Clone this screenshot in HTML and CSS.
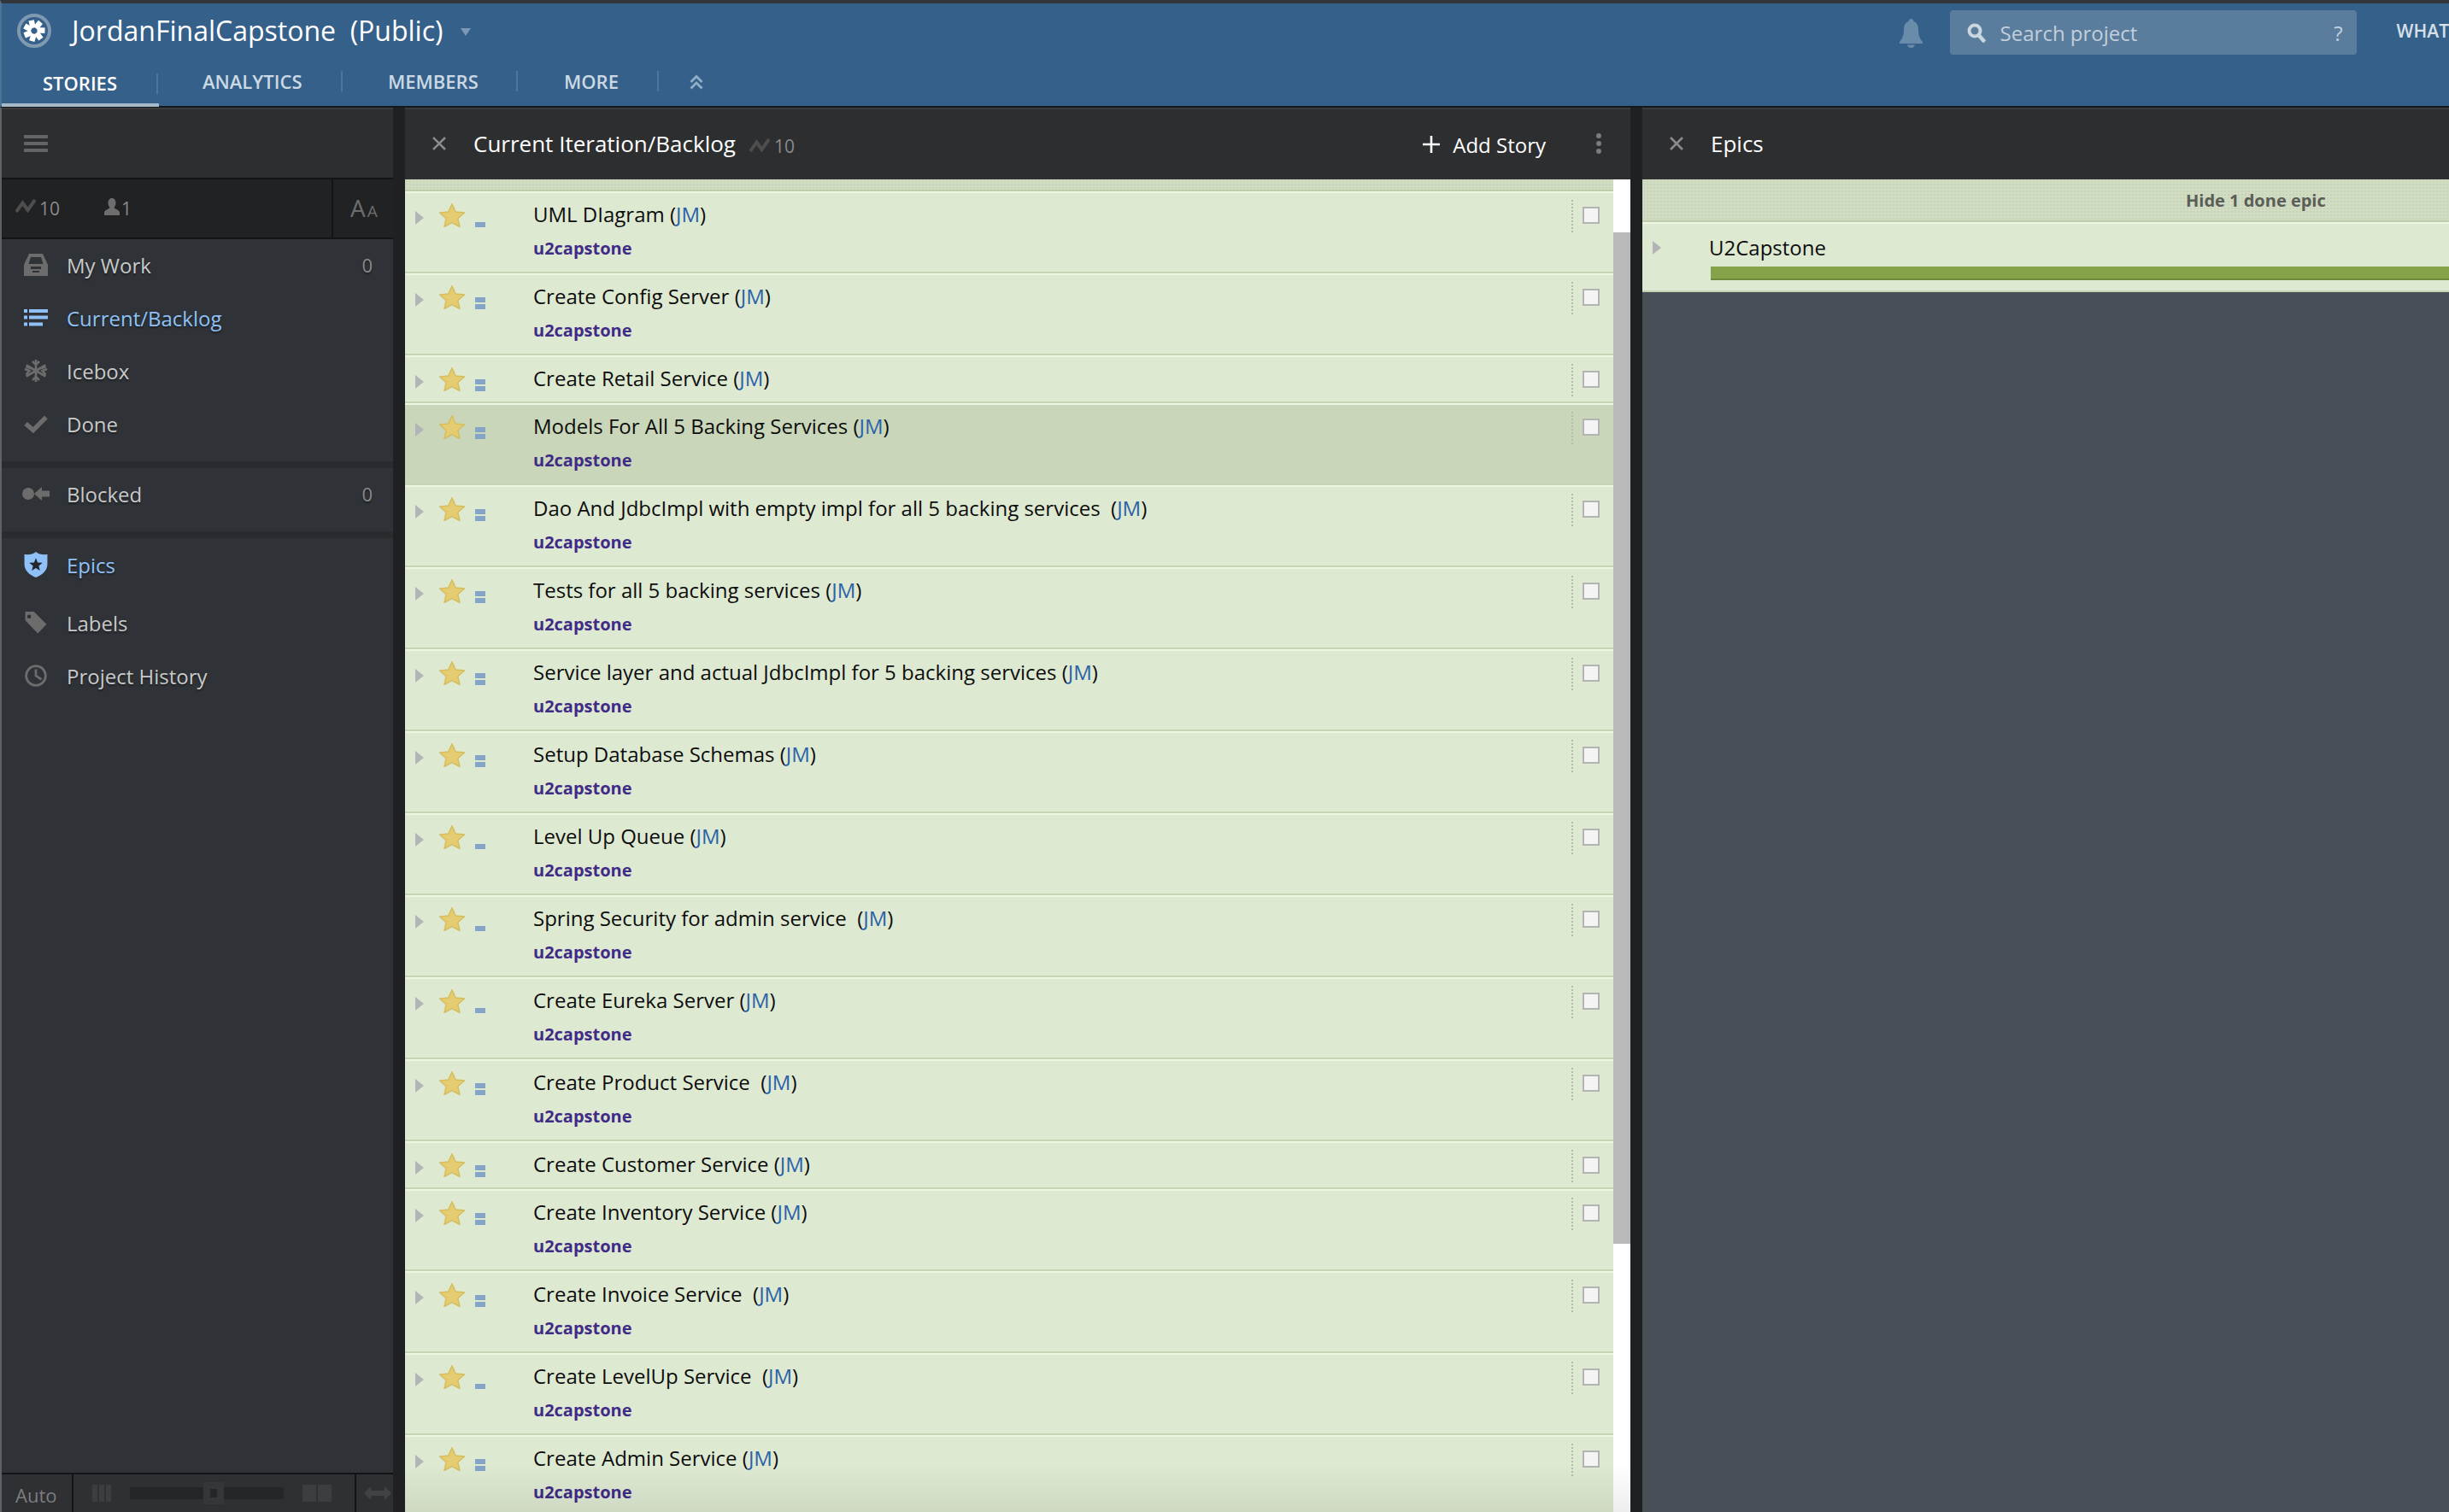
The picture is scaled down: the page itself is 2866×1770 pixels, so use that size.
FILE: index.html
```html
<!DOCTYPE html>
<html lang="en">
<head>
<meta charset="utf-8">
<title>JordanFinalCapstone (Public)</title>
<link rel="stylesheet" href="styles.css">
</head>
<body>
<svg class="sprite" width="0" height="0" aria-hidden="true">
  <defs>
    <symbol id="star" viewBox="0 0 30 28"><path d="M15 .8l4.200 9.200 10.200 1-7.600 6.700 2.200 9.800L15 22.600l-9 4.900 2.200-9.800L.6 11 10.800 10z" fill="#e3cd70" stroke="#d6bd5e" stroke-width="1.500" stroke-linejoin="round"/></symbol>
    <symbol id="chart" viewBox="0 0 24 16"><path d="M1 15L8.500 4.500l6 8.500L23 1" fill="none" stroke="currentColor" stroke-width="4"/></symbol>
  </defs>
</svg>
<header class="topbar">
  <div class="topbar-main">
    <svg class="logo" viewBox="0 0 40 40">
      <circle cx="20" cy="20" r="18" fill="#35608a" stroke="#7f99b1" stroke-width="4"/>
      <g fill="#fff">
        <rect x="16" y="7.500" width="6.500" height="9" transform="rotate(-12 20 20)"/>
        <rect x="16" y="7.500" width="6.500" height="9" transform="rotate(40 20 20)"/>
        <rect x="16" y="7.500" width="6.500" height="9" transform="rotate(92 20 20)"/>
        <rect x="16" y="7.500" width="6.500" height="9" transform="rotate(144 20 20)"/>
        <rect x="16" y="7.500" width="6.500" height="9" transform="rotate(196 20 20)"/>
        <rect x="16" y="7.500" width="6.500" height="9" transform="rotate(248 20 20)"/>
        <rect x="16" y="7.500" width="6.500" height="9" transform="rotate(300 20 20)"/>
      </g>
    </svg>
    <h1 class="project-name">JordanFinalCapstone&nbsp; (Public)</h1>
    <span class="caret"></span>
    <svg class="bell" viewBox="0 0 27 34"><path d="M13.500 0c2 0 3 1.500 3 3 4 1.500 5.500 5 5.500 10 0 6 1.500 10 5 14v2H0v-2c3.500-4 5-8 5-14 0-5 1.500-8.500 5.500-10 0-1.500 1-3 3-3zM9 30.500h9c-.5 2-2 3.500-4.500 3.500S9.500 32.500 9 30.500z" fill="#6a8cab"/></svg>
    <div class="search">
      <svg class="search-icon" viewBox="0 0 23 23"><circle cx="9" cy="9" r="6.500" fill="none" stroke="#c9d5df" stroke-width="4"/><path d="M13.500 14l7 8" stroke="#c9d5df" stroke-width="4.500"/></svg>
      <span class="search-text">Search project</span>
      <span class="search-help">?</span>
    </div>
    <span class="whats-new">WHAT</span>
  </div>
  <nav class="tabs">
    <a class="tab tab-active">STORIES</a>
    <a class="tab tab-analytics">ANALYTICS</a>
    <a class="tab tab-members">MEMBERS</a>
    <a class="tab tab-more">MORE</a>
    <svg class="tab-collapse" viewBox="0 0 16 18"><path d="M1.500 9l6.500-6.500L14.500 9M1.500 16.500L8 10l6.500 6.500" fill="none" stroke="#93aec7" stroke-width="2.800"/></svg>
  </nav>
</header>
<main class="workspace">
  <aside class="sidebar">
    <div class="side-head">
      <span class="burger"><i></i><i></i><i></i></span>
    </div>
    <div class="side-stats">
      <div class="stats-left">
        <svg class="stat-chart"><use href="#chart"/></svg><span class="stat-num">10</span>
        <svg class="stat-person" viewBox="0 0 18 20"><path d="M9 0c3 0 4.500 2.500 4.500 5.500S12 10 11.500 11c0 1.500 6.500 2.500 6.500 6v3H0v-3c0-3.500 6.500-4.500 6.500-6C6 10 4.500 8.500 4.500 5.500S6 0 9 0z" fill="#6e6e6e"/></svg><span class="stat-num">1</span>
      </div>
      <div class="font-size"><span class="aa-big">A</span><span class="aa-small">A</span></div>
    </div>
    <nav class="menu">
      <section class="menu-group menu-group-first">
        <a class="menu-item">
          <svg class="menu-icon" viewBox="0 0 28 26"><path d="M6 0h16l6 13v13H0V13zM8 4l-2.500 8h17L20 4zM8 15v3h12v-3zM10 20v2h8v-2z" fill="#6c6c6c" fill-rule="evenodd"/></svg>
          <span class="menu-label">My Work</span><span class="menu-count">0</span>
        </a>
        <a class="menu-item is-active">
          <svg class="menu-icon" viewBox="0 0 28 20"><path d="M0 0h4v4H0zM6 0h22v4H6zM0 7.500h4v4H0zM6 7.500h22v4H6zM0 15.500h4v4H0zM6 15.500h16v4H6z" fill="#8fc1f8"/></svg>
          <span class="menu-label">Current/Backlog</span>
        </a>
        <a class="menu-item">
          <svg class="menu-icon menu-icon-snow" viewBox="0 0 30 26"><g stroke="#6c6c6c" stroke-width="2.600" fill="none"><path d="M15 0v26M3.700 6.500l22.600 13M26.300 6.500l-22.600 13"/><path d="M11 2l4 4 4-4M11 24l4-4 4 4M2 11l5.500 2-4 4.500M28 11l-5.500 2 4 4.500M3.500 8.500L9 10M26.500 8.500L21 10"/></g></svg>
          <span class="menu-label">Icebox</span>
        </a>
        <a class="menu-item">
          <svg class="menu-icon" viewBox="0 0 26 18"><path d="M2 9l8 7L24 2" fill="none" stroke="#6c6c6c" stroke-width="5"/></svg>
          <span class="menu-label">Done</span>
        </a>
      </section>
      <section class="menu-group menu-group-blocked">
        <a class="menu-item">
          <svg class="menu-icon menu-icon-wide" viewBox="0 0 32 18"><circle cx="7" cy="9" r="7" fill="#6c6c6c"/><path d="M14 9l9-8v4.500h9v7h-9V17z" fill="#6c6c6c"/></svg>
          <span class="menu-label">Blocked</span><span class="menu-count">0</span>
        </a>
      </section>
      <section class="menu-group menu-group-last">
        <a class="menu-item is-active">
          <svg class="menu-icon menu-icon-epic" viewBox="0 0 26 29"><path d="M13 0c3 2.500 7 3.500 13 3v11c0 7-5.500 12-13 15C5.500 26 0 21 0 14V3c6 .5 10-.5 13-3z" fill="#8fc1f8"/><path d="M13 7l2 5 5.500.4-4.200 3.500 1.300 5.300L13 18.300l-4.600 2.900 1.300-5.300-4.200-3.500 5.500-.4z" fill="#24282c"/></svg>
          <span class="menu-label">Epics</span>
        </a>
        <a class="menu-item menu-item-labels">
          <svg class="menu-icon" viewBox="0 0 24 23"><path d="M1 0h9l13 13-9 9.500L1 9zM5 3a2 2 0 100 4 2 2 0 000-4z" fill="#6c6c6c" fill-rule="evenodd"/></svg>
          <span class="menu-label">Labels</span>
        </a>
        <a class="menu-item">
          <svg class="menu-icon" viewBox="0 0 24 24"><circle cx="12" cy="12" r="10.500" fill="none" stroke="#6c6c6c" stroke-width="2.600"/><path d="M12 5v7l6 4" fill="none" stroke="#6c6c6c" stroke-width="2.600"/></svg>
          <span class="menu-label">Project History</span>
        </a>
      </section>
    </nav>
    <footer class="side-foot">
      <span class="foot-auto">Auto</span>
      <div class="foot-slider">
        <span class="bars-three"><i></i><i></i><i></i></span>
        <span class="slider-track"><span class="slider-handle"><i></i></span></span>
        <span class="bars-two"><i></i><i></i></span>
      </div>
      <span class="foot-arrow">
        <svg viewBox="0 0 32 16"><path d="M0 8l8-8v5h16V0l8 8-8 8v-5H8v5z" fill="#404245"/></svg>
      </span>
    </footer>
  </aside>
  <section class="panel panel-stories">
    <div class="panel-head">
      <svg class="close" viewBox="0 0 16 16"><path d="M1 1l14 14M15 1L1 15" stroke="#8b8b8b" stroke-width="2.600"/></svg>
      <h2 class="panel-title">Current Iteration/Backlog</h2>
      <svg class="head-chart"><use href="#chart"/></svg><span class="head-num">10</span>
      <span class="add-story">
        <svg class="plus" viewBox="0 0 20 20"><path d="M10 0v20M0 10h20" stroke="#fff" stroke-width="2.600"/></svg>
        Add Story
      </span>
      <span class="kebab"><i></i><i></i><i></i></span>
    </div>
    <div class="panel-body">
      <div class="story-list">
        <div class="list-strip"></div>
        <article class="story"><span class="tri"></span><svg class="star"><use href="#star"/></svg><span class="est"><i></i></span><div class="story-text"><div class="story-title">UML DIagram (<span class="owner">JM</span>)</div><div class="story-label">u2capstone</div></div><span class="dots"></span><span class="check"></span></article>
        <article class="story"><span class="tri"></span><svg class="star"><use href="#star"/></svg><span class="est"><i></i><i></i></span><div class="story-text"><div class="story-title">Create Config Server (<span class="owner">JM</span>)</div><div class="story-label">u2capstone</div></div><span class="dots"></span><span class="check"></span></article>
        <article class="story story-compact"><span class="tri"></span><svg class="star"><use href="#star"/></svg><span class="est"><i></i><i></i></span><div class="story-text"><div class="story-title">Create Retail Service (<span class="owner">JM</span>)</div></div><span class="dots"></span><span class="check"></span></article>
        <article class="story story-selected"><span class="tri"></span><svg class="star"><use href="#star"/></svg><span class="est"><i></i><i></i></span><div class="story-text"><div class="story-title">Models For All 5 Backing Services (<span class="owner">JM</span>)</div><div class="story-label">u2capstone</div></div><span class="dots"></span><span class="check"></span></article>
        <article class="story"><span class="tri"></span><svg class="star"><use href="#star"/></svg><span class="est"><i></i><i></i></span><div class="story-text"><div class="story-title">Dao And JdbcImpl with empty impl for all 5 backing services&nbsp; (<span class="owner">JM</span>)</div><div class="story-label">u2capstone</div></div><span class="dots"></span><span class="check"></span></article>
        <article class="story"><span class="tri"></span><svg class="star"><use href="#star"/></svg><span class="est"><i></i><i></i></span><div class="story-text"><div class="story-title">Tests for all 5 backing services (<span class="owner">JM</span>)</div><div class="story-label">u2capstone</div></div><span class="dots"></span><span class="check"></span></article>
        <article class="story"><span class="tri"></span><svg class="star"><use href="#star"/></svg><span class="est"><i></i><i></i></span><div class="story-text"><div class="story-title">Service layer and actual JdbcImpl for 5 backing services (<span class="owner">JM</span>)</div><div class="story-label">u2capstone</div></div><span class="dots"></span><span class="check"></span></article>
        <article class="story"><span class="tri"></span><svg class="star"><use href="#star"/></svg><span class="est"><i></i><i></i></span><div class="story-text"><div class="story-title">Setup Database Schemas (<span class="owner">JM</span>)</div><div class="story-label">u2capstone</div></div><span class="dots"></span><span class="check"></span></article>
        <article class="story"><span class="tri"></span><svg class="star"><use href="#star"/></svg><span class="est"><i></i></span><div class="story-text"><div class="story-title">Level Up Queue (<span class="owner">JM</span>)</div><div class="story-label">u2capstone</div></div><span class="dots"></span><span class="check"></span></article>
        <article class="story"><span class="tri"></span><svg class="star"><use href="#star"/></svg><span class="est"><i></i></span><div class="story-text"><div class="story-title">Spring Security for admin service&nbsp; (<span class="owner">JM</span>)</div><div class="story-label">u2capstone</div></div><span class="dots"></span><span class="check"></span></article>
        <article class="story"><span class="tri"></span><svg class="star"><use href="#star"/></svg><span class="est"><i></i></span><div class="story-text"><div class="story-title">Create Eureka Server (<span class="owner">JM</span>)</div><div class="story-label">u2capstone</div></div><span class="dots"></span><span class="check"></span></article>
        <article class="story"><span class="tri"></span><svg class="star"><use href="#star"/></svg><span class="est"><i></i><i></i></span><div class="story-text"><div class="story-title">Create Product Service&nbsp; (<span class="owner">JM</span>)</div><div class="story-label">u2capstone</div></div><span class="dots"></span><span class="check"></span></article>
        <article class="story story-compact"><span class="tri"></span><svg class="star"><use href="#star"/></svg><span class="est"><i></i><i></i></span><div class="story-text"><div class="story-title">Create Customer Service (<span class="owner">JM</span>)</div></div><span class="dots"></span><span class="check"></span></article>
        <article class="story"><span class="tri"></span><svg class="star"><use href="#star"/></svg><span class="est"><i></i><i></i></span><div class="story-text"><div class="story-title">Create Inventory Service (<span class="owner">JM</span>)</div><div class="story-label">u2capstone</div></div><span class="dots"></span><span class="check"></span></article>
        <article class="story"><span class="tri"></span><svg class="star"><use href="#star"/></svg><span class="est"><i></i><i></i></span><div class="story-text"><div class="story-title">Create Invoice Service&nbsp; (<span class="owner">JM</span>)</div><div class="story-label">u2capstone</div></div><span class="dots"></span><span class="check"></span></article>
        <article class="story"><span class="tri"></span><svg class="star"><use href="#star"/></svg><span class="est"><i></i></span><div class="story-text"><div class="story-title">Create LevelUp Service&nbsp; (<span class="owner">JM</span>)</div><div class="story-label">u2capstone</div></div><span class="dots"></span><span class="check"></span></article>
        <article class="story"><span class="tri"></span><svg class="star"><use href="#star"/></svg><span class="est"><i></i><i></i></span><div class="story-text"><div class="story-title">Create Admin Service (<span class="owner">JM</span>)</div><div class="story-label">u2capstone</div></div><span class="dots"></span><span class="check"></span></article>
      </div>
      <div class="scroll-track"><div class="scroll-thumb"></div></div>
      <div class="list-fade"></div>
    </div>
  </section>
  <section class="panel panel-epics">
    <div class="panel-head">
      <svg class="close" viewBox="0 0 16 16"><path d="M1 1l14 14M15 1L1 15" stroke="#8b8b8b" stroke-width="2.600"/></svg>
      <h2 class="panel-title">Epics</h2>
    </div>
    <div class="epics-strip">Hide 1 done epic</div>
    <article class="epic">
      <span class="tri"></span>
      <div class="epic-body">
        <div class="epic-name">U2Capstone</div>
        <div class="epic-bar"></div>
      </div>
    </article>
  </section>
</main>
</body>
</html>
```
FILE: styles.css
```css
* { box-sizing: border-box; }
html, body { margin: 0; height: 100%; overflow: hidden; }
body {
  display: flex;
  flex-direction: column;
  height: 1770px;
  background: #1f2021;
  font-family: "Open Sans", "Noto Sans", sans-serif;
  color: #111;
}
.sprite { position: absolute; }
h1, h2 { margin: 0; font-weight: 400; }

/* top bar */
.topbar {
  height: 126px;
  flex: none;
  border-top: 4px solid #33363a;
  border-bottom: 2px solid #15181b;
  border-left: 2px solid #4d7396;
  background: #35608a;
}
.topbar-main { display: flex; align-items: flex-start; height: 76px; }
.logo { width: 40px; height: 40px; margin: 12px 0 0 18px; flex: none; }
.project-name {
  margin: 10px 0 0 24px;
  font-size: 32px;
  line-height: 44px;
  color: #fff;
  white-space: nowrap;
}
.caret {
  width: 0; height: 0;
  margin: 29px 0 0 21px;
  border: 6px solid transparent;
  border-top: 9px solid #7d99b4;
  border-bottom: 0;
}
.bell { width: 27px; height: 34px; margin: 18px 0 0 auto; flex: none; }
.search {
  display: flex;
  align-items: center;
  width: 476px;
  height: 52px;
  margin: 8px 0 0 32px;
  padding: 0 16px 0 20px;
  background: #5b7d9d;
  border-radius: 4px;
  flex: none;
}
.search-icon { width: 23px; height: 23px; flex: none; }
.search-text { margin-left: 16px; font-size: 24px; color: #c2cfdb; }
.search-help { margin-left: auto; font-size: 24px; color: #c2cfdb; }
.whats-new {
  margin: 12px 0 0 47px;
  flex: none;
  white-space: nowrap;
  font-size: 21px;
  line-height: 40px;
  font-weight: 600;
  color: #d6e0e9;
}
.tabs { display: flex; align-items: flex-start; height: 44px; }
.tab {
  font-size: 22px;
  line-height: 30px;
  font-weight: 600;
  color: #cbd9e4;
  white-space: nowrap;
}
.tab-active {
  width: 184px;
  height: 45px;
  padding: 2px 0 0 48px;
  color: #fff;
  border-bottom: 4px solid #a8b9c9;
  position: relative;
}
.tab-active::after, .tab-analytics::after, .tab-members::after, .tab-more::after {
  content: "";
  width: 2px;
  height: 24px;
  background: #4f7699;
  flex: none;
}
.tab-active::after { position: absolute; right: 1px; top: 6px; }
.tab-analytics, .tab-members, .tab-more { display: flex; align-items: center; height: 30px; }
.tab-analytics { width: 215px; padding-left: 51px; justify-content: space-between; }
.tab-members { width: 205px; padding-left: 53px; justify-content: space-between; }
.tab-more { width: 165px; padding-left: 54px; justify-content: space-between; }
.tab-collapse { width: 16px; height: 18px; margin: 7px 0 0 36px; }

/* three columns */
.workspace {
  flex: 1;
  display: grid;
  grid-template-columns: 460px 1434px 1fr;
  column-gap: 14px;
  min-height: 0;
  background: #1f2021;
}
.sidebar {
  display: flex;
  flex-direction: column;
  border-left: 2px solid #5e6266;
  background: #2f3337;
  min-height: 0;
}
.side-head {
  height: 84px;
  flex: none;
  background: #2d2e30;
  border-top: 2px solid #3a3b3d;
  border-bottom: 2px solid #131415;
  padding: 30px 0 0 26px;
}
.burger { display: flex; flex-direction: column; gap: 4px; width: 28px; }
.burger i { height: 4px; background: #636568; border-radius: 1px; }
.side-stats {
  height: 70px;
  flex: none;
  display: flex;
  background: #212224;
  border-bottom: 2px solid #131415;
}
.stats-left { flex: 1; display: flex; align-items: center; padding-left: 16px; color: #8a8a8a; }
.stat-chart { width: 24px; height: 16px; color: #4e4e4e; margin-top: -6px; }
.stat-num { font-size: 21px; margin-left: 4px; }
.stat-num + .stat-person { margin-left: 52px; }
.stat-person { width: 18px; height: 20px; margin-top: -4px; }
.stat-person + .stat-num { margin-left: 2px; }
.font-size {
  width: 72px;
  border-left: 2px solid #131415;
  padding-left: 20px;
  display: flex;
  align-items: baseline;
  color: #6e6e6e;
  line-height: 66px;
}
.aa-big { font-size: 28px; }
.aa-small { font-size: 19px; margin-left: 2px; }
.menu { flex: 1; min-height: 0; }
.menu-group { border-bottom: 8px solid #282c2e; }
.menu-group-first { height: 268px; }
.menu-group-blocked { height: 82px; }
.menu-group-last { border-bottom: 0; padding-top: 1px; }
.menu-item {
  display: flex;
  align-items: center;
  height: 62px;
  padding: 0 0 2px 26px;
  color: #c9c9c9;
  font-size: 24px;
  text-shadow: 0 2px 2px rgba(0, 0, 0, .4);
}
.menu-icon { width: 28px; height: 26px; flex: none; }
.menu-icon-wide { width: 32px; margin-left: -2px; margin-right: -2px; }
.menu-icon-snow { width: 30px; margin-left: -1px; margin-right: -1px; }
.menu-icon-epic { height: 30px; }
.menu-label { margin-left: 22px; }
.menu-count { margin-left: auto; margin-right: 24px; color: #8a8a8a; font-size: 22px; }
.menu-item.is-active { color: #8fc1f8; }
.menu-item-labels { margin-top: 6px; }
.side-foot {
  height: 46px;
  flex: none;
  display: flex;
  background: #2e3033;
  border-top: 2px solid #131415;
  border-bottom-left-radius: 6px;
}
.foot-auto {
  box-sizing: content-box;
  width: 66px;
  padding-left: 16px;
  font-size: 22px;
  line-height: 48px;
  color: #7d7d7d;
  border-right: 2px solid #131415;
}
.foot-slider {
  width: 331px;
  display: flex;
  align-items: center;
  padding: 0 27px 0 22px;
  border-right: 2px solid #131415;
  flex: none;
}
.bars-three, .bars-two { display: flex; gap: 2px; height: 20px; }
.bars-three i { width: 6px; background: #3d3e41; }
.bars-two i { width: 16px; background: #3d3e41; }
.slider-track {
  width: 180px;
  height: 14px;
  margin: 0 22px;
  background: #252628;
  position: relative;
}
.slider-handle {
  position: absolute;
  left: 86px;
  top: -6px;
  width: 24px;
  height: 26px;
  background: #35363a;
  display: flex;
  align-items: center;
  justify-content: center;
}
.slider-handle i { width: 8px; height: 10px; background: #252628; }
.foot-arrow { flex: 1; display: flex; align-items: center; padding-left: 9px; }
.foot-arrow svg { width: 32px; height: 16px; }

/* panels */
.panel { display: flex; flex-direction: column; min-height: 0; min-width: 0; }
.panel-head {
  height: 84px;
  flex: none;
  display: flex;
  align-items: center;
  padding-bottom: 2px;
  background: #2d2e30;
  border-top: 2px solid #3a3b3d;
}
.close { width: 16px; height: 16px; margin-left: 32px; flex: none; }
.panel-title {
  margin-left: 32px;
  font-size: 26px;
  line-height: 34px;
  color: #fff;
  white-space: nowrap;
}
.head-chart { width: 24px; height: 16px; margin: 4px 0 0 16px; color: #4e4e4e; }
.head-num { margin: 6px 0 0 5px; font-size: 21px; color: #8a8a8a; }
.add-story {
  display: flex;
  align-items: center;
  gap: 15px;
  margin: 2px 0 0 auto;
  font-size: 24px;
  color: #fff;
}
.plus { width: 20px; height: 20px; }
.kebab { display: flex; flex-direction: column; gap: 3px; margin: 0 34px 0 59px; }
.kebab i { width: 6px; height: 6px; border-radius: 50%; background: #7b7b7b; }

.panel-body { flex: 1; min-height: 0; display: flex; position: relative; overflow: hidden; }
.story-list { width: 1414px; flex: none; }
.list-strip, .epics-strip {
  background-color: #d1dcc2;
  background-image: radial-gradient(circle at 2px 2px, #c6d3b6 1.2px, transparent 1.6px);
  background-size: 4px 4px;
  border-bottom: 2px solid #bfcdac;
}
.list-strip { height: 14px; }
.story {
  display: flex;
  align-items: flex-start;
  height: 96px;
  padding-left: 12px;
  background: #dee9d2;
  border-top: 2px solid #eef6e4;
  border-bottom: 2px solid #c6d4b5;
}
.story-compact { height: 56px; }
.story-selected { background: #c9d6b9; }
.tri {
  flex: none;
  width: 0;
  height: 0;
  margin-top: 21px;
  border-left: 10px solid #b3b4b6;
  border-top: 8px solid transparent;
  border-bottom: 8px solid transparent;
}
.star { width: 30px; height: 28px; margin: 12px 0 0 18px; flex: none; }
.est {
  display: flex;
  flex-direction: column-reverse;
  gap: 2px;
  width: 12px;
  height: 16px;
  margin: 24px 0 0 12px;
  flex: none;
}
.est i { height: 6px; background: #84a5c6; }
.story-text { margin-left: 56px; flex: 1; min-width: 0; }
.story-title { margin-top: 9px; font-size: 24px; line-height: 32px; color: #0d0d0d; white-space: nowrap; }
.owner { color: #2c62a8; }
.story-label { margin-top: 10px; font-size: 20px; line-height: 28px; font-weight: 700; color: #402b87; }
.dots { width: 2px; height: 38px; margin-top: 8px; border-left: 2px dotted #b4bbb0; flex: none; }
.check {
  width: 20px;
  height: 20px;
  margin: 16px 16px 0 11px;
  border: 2px solid #b4b4b4;
  background: #f4f4f4;
  flex: none;
}
.scroll-track { width: 20px; flex: none; background: #fff; }
.scroll-thumb { height: 1184px; margin-top: 62px; background: #b9b9b9; }
.list-fade {
  position: absolute;
  left: 0;
  right: 0;
  bottom: 0;
  height: 56px;
  background: linear-gradient(rgba(0, 0, 0, 0), rgba(0, 0, 0, .07));
}

/* epics */
.panel-epics { background: #484f57; overflow: hidden; }
.epics-strip {
  height: 50px;
  padding-left: 636px;
  font-size: 20px;
  line-height: 50px;
  font-weight: 700;
  color: #5a5d58;
  white-space: nowrap;
}
.epic {
  display: flex;
  align-items: flex-start;
  height: 82px;
  padding-left: 12px;
  background: #dee9d2;
  border-top: 2px solid #eef6e4;
  border-bottom: 2px solid #c6d4b5;
}
.epic .tri { margin-top: 20px; }
.epic-body { flex: 1; margin-left: 58px; min-width: 0; }
.epic-name { margin: 10px 0 0 -2px; font-size: 24px; line-height: 36px; color: #0d0d0d; }
.epic-bar { height: 16px; margin-top: 4px; background: #86a34a; border-bottom: 2px solid #6f8a3c; }
```
